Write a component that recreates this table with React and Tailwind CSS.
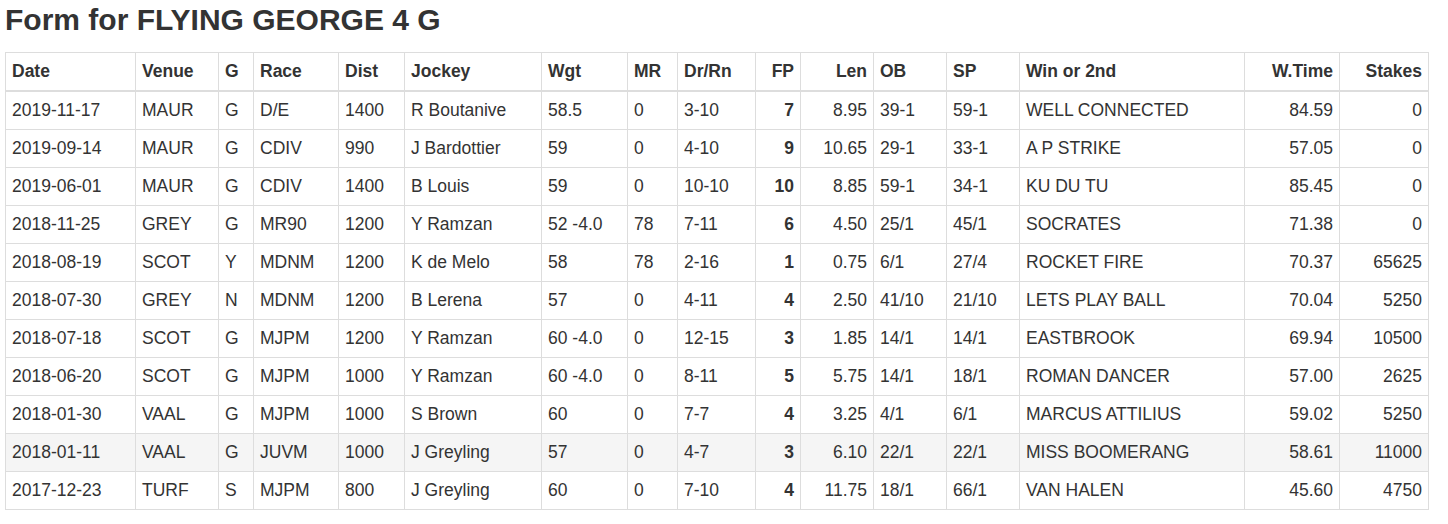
const rows = [
  ['2019-11-17', 'MAUR', 'G', 'D/E', '1400', 'R Boutanive', '58.5', '0', '3-10', '7', '8.95', '39-1', '59-1', 'WELL CONNECTED', '84.59', '0'],
  ['2019-09-14', 'MAUR', 'G', 'CDIV', '990', 'J Bardottier', '59', '0', '4-10', '9', '10.65', '29-1', '33-1', 'A P STRIKE', '57.05', '0'],
  ['2019-06-01', 'MAUR', 'G', 'CDIV', '1400', 'B Louis', '59', '0', '10-10', '10', '8.85', '59-1', '34-1', 'KU DU TU', '85.45', '0'],
  ['2018-11-25', 'GREY', 'G', 'MR90', '1200', 'Y Ramzan', '52 -4.0', '78', '7-11', '6', '4.50', '25/1', '45/1', 'SOCRATES', '71.38', '0'],
  ['2018-08-19', 'SCOT', 'Y', 'MDNM', '1200', 'K de Melo', '58', '78', '2-16', '1', '0.75', '6/1', '27/4', 'ROCKET FIRE', '70.37', '65625'],
  ['2018-07-30', 'GREY', 'N', 'MDNM', '1200', 'B Lerena', '57', '0', '4-11', '4', '2.50', '41/10', '21/10', 'LETS PLAY BALL', '70.04', '5250'],
  ['2018-07-18', 'SCOT', 'G', 'MJPM', '1200', 'Y Ramzan', '60 -4.0', '0', '12-15', '3', '1.85', '14/1', '14/1', 'EASTBROOK', '69.94', '10500'],
  ['2018-06-20', 'SCOT', 'G', 'MJPM', '1000', 'Y Ramzan', '60 -4.0', '0', '8-11', '5', '5.75', '14/1', '18/1', 'ROMAN DANCER', '57.00', '2625'],
  ['2018-01-30', 'VAAL', 'G', 'MJPM', '1000', 'S Brown', '60', '0', '7-7', '4', '3.25', '4/1', '6/1', 'MARCUS ATTILIUS', '59.02', '5250'],
  ['2018-01-11', 'VAAL', 'G', 'JUVM', '1000', 'J Greyling', '57', '0', '4-7', '3', '6.10', '22/1', '22/1', 'MISS BOOMERANG', '58.61', '11000'],
  ['2017-12-23', 'TURF', 'S', 'MJPM', '800', 'J Greyling', '60', '0', '7-10', '4', '11.75', '18/1', '66/1', 'VAN HALEN', '45.60', '4750'],
]

// header label, width class, right aligned
const cols = [
  ['Date', 'w-[130px]', false],
  ['Venue', 'w-[83px]', false],
  ['G', 'w-[35px]', false],
  ['Race', 'w-[85px]', false],
  ['Dist', 'w-[66px]', false],
  ['Jockey', 'w-[137px]', false],
  ['Wgt', 'w-[86px]', false],
  ['MR', 'w-[50px]', false],
  ['Dr/Rn', 'w-[78px]', false],
  ['FP', 'w-[45px]', true],
  ['Len', 'w-[73px]', true],
  ['OB', 'w-[73px]', false],
  ['SP', 'w-[73px]', false],
  ['Win or 2nd', 'w-[225px]', false],
  ['W.Time', 'w-[95px]', true],
  ['Stakes', 'w-[89px]', true],
]

export default function App() {
  return (
    <div className="bg-white text-[#333] px-[5px] font-['Liberation_Sans',Arial,sans-serif]">
      <h2 className="text-[30px] leading-[33px] font-bold pt-[3px] mb-[16px]">
        Form for FLYING GEORGE 4 G
      </h2>
      <table className="table-fixed border-collapse w-[1424px] text-[17.5px] leading-[21px]">
        <thead>
          <tr>
            {cols.map(([label, w, right]) => (
              <th
                key={label}
                className={`${w} border border-[#ddd] border-b-2 px-[6px] py-2 font-bold align-bottom ${right ? 'text-right' : 'text-left'}`}
              >
                {label}
              </th>
            ))}
          </tr>
        </thead>
        <tbody>
          {rows.map((r, i) => (
            <tr key={r[0]} className={i === 9 ? 'bg-[#f5f5f5]' : ''}>
              {r.map((cell, j) => (
                <td
                  key={j}
                  className={`border border-[#ddd] px-[6px] py-2 whitespace-nowrap ${cols[j][2] ? 'text-right' : 'text-left'} ${j === 9 ? 'font-bold' : ''}`}
                >
                  {cell}
                </td>
              ))}
            </tr>
          ))}
        </tbody>
      </table>
    </div>
  )
}
